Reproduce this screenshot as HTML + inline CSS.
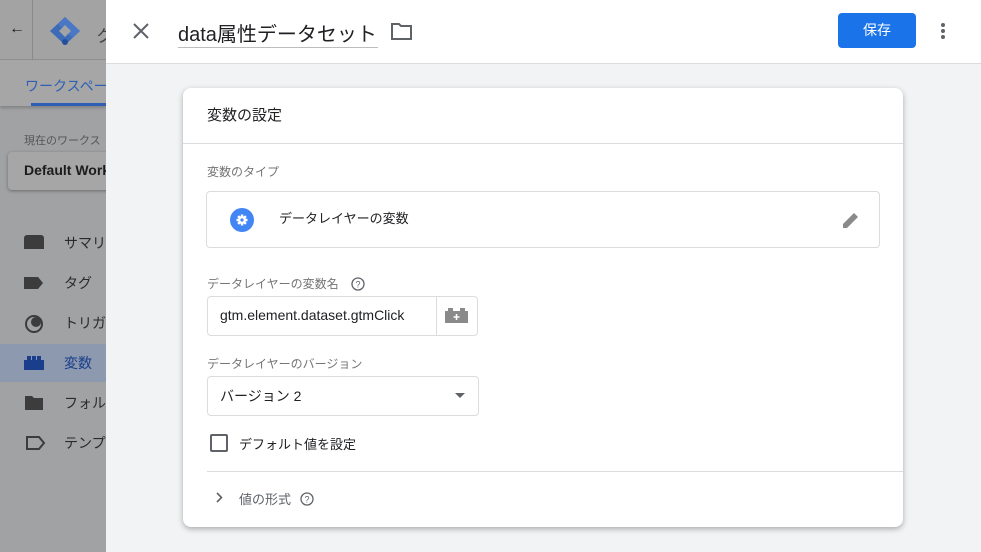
<!DOCTYPE html>
<html><head><meta charset="utf-8"><style>
*{box-sizing:border-box;margin:0;padding:0}
body{width:981px;height:552px;overflow:hidden;position:relative;font-family:"Liberation Sans","Noto Sans CJK JP",sans-serif;background:#a2a3a4}
.abs{position:absolute;white-space:nowrap}
.left{left:0;top:0;width:106px;height:552px;background:#a1a2a3;overflow:hidden}
.lt{font-size:14px;color:#2a2a2a}
.main{left:106px;top:0;width:875px;height:552px;background:#f1f3f4}
.top{left:106px;top:0;width:875px;height:64px;background:#fff;border-bottom:1px solid #dadce0}
.card{left:183px;top:88px;width:720px;height:439px;background:#fff;border-radius:8px;box-shadow:0 2px 6px rgba(0,0,0,.3)}
.lbl{font-size:12px;color:#757575}
</style></head><body>
<div class="abs left">
 <div class="abs" style="left:0;top:0;width:106px;height:60px;background:#a3a3a3;border-bottom:1px solid #909090"></div>
 <div class="abs" style="left:32px;top:0;width:1px;height:60px;background:#8a8a8a"></div>
 <div class="abs" style="left:9px;top:20px;font-size:16px;color:#222">←</div>
 <svg class="abs" style="left:49px;top:16px" width="32" height="30" viewBox="0 0 32 30"><path d="M16 1 L31 15 L16 29 L1 15Z" fill="#3d6bb8"/><path d="M16 1 L31 15 L23.5 22 L9 8Z" fill="#4a78c4"/><path d="M16 9 L22 15 L16 21 L10 15Z" fill="#a3a3a3"/><circle cx="16" cy="26" r="3" fill="#234f9a"/></svg>
 <div class="abs" style="left:96px;top:22px;font-size:17px;color:#444">ク</div>
 <div class="abs" style="left:0;top:60px;width:106px;height:46px;background:#a6a6a6;box-shadow:0 2px 3px rgba(0,0,0,.2)"></div>
 <div class="abs" style="left:25px;top:76px;font-size:14px;color:#2f5fb5">ワークスペー</div>
 <div class="abs" style="left:31px;top:103px;width:75px;height:3px;background:#2f5fb5"></div>
 <div class="abs" style="left:24px;top:132px;font-size:11px;color:#555">現在のワークス</div>
 <div class="abs" style="left:8px;top:152px;width:110px;height:38px;background:#a6a6a6;border-radius:4px;box-shadow:0 1px 3px rgba(0,0,0,.35)"></div>
 <div class="abs" style="left:24px;top:162px;font-size:14px;color:#1c1c1c;font-weight:bold">Default Work</div>
 <div class="abs" style="left:24px;top:235px;width:20px;height:14px;background:#3c3c3c;border-radius:3px 3px 0 0"></div>
 <div class="abs lt" style="left:64px;top:233px">サマリ</div>
 <svg class="abs" style="left:24px;top:277px" width="20" height="12"><path d="M0 0H14L19 6L14 12H0Z" fill="#3c3c3c"/></svg>
 <div class="abs lt" style="left:64px;top:273px">タグ</div>
 <svg class="abs" style="left:24px;top:314px" width="20" height="20"><circle cx="10" cy="10" r="8" fill="none" stroke="#3c3c3c" stroke-width="2"/><circle cx="12" cy="8" r="5" fill="#3c3c3c"/></svg>
 <div class="abs lt" style="left:64px;top:313px">トリガ</div>
 <div class="abs" style="left:0;top:344px;width:106px;height:38px;background:#8c99ae"></div>
 <svg class="abs" style="left:24px;top:356px" width="20" height="14"><path d="M0 4H3V0H7V4H8V0H12V4H13V0H17V4H20V14H0Z" fill="#1a3e8c"/></svg>
 <div class="abs lt" style="left:64px;top:353px;color:#1a3e8c">変数</div>
 <svg class="abs" style="left:25px;top:396px" width="18" height="14"><path d="M0 0H7L9 2H18V14H0Z" fill="#3c3c3c"/></svg>
 <div class="abs lt" style="left:64px;top:393px">フォル</div>
 <svg class="abs" style="left:26px;top:436px" width="20" height="14"><path d="M1 1H13L18 7L13 13H1Z" fill="none" stroke="#3c3c3c" stroke-width="2"/></svg>
 <div class="abs lt" style="left:64px;top:433px">テンプ</div>
</div>
<div class="abs main"></div>
<div class="abs top"></div>
<svg class="abs" style="left:133px;top:23px" width="16" height="16"><path d="M1 1L15 15M15 1L1 15" stroke="#5f6368" stroke-width="2"/></svg>
<div class="abs" style="left:178px;top:18px;font-size:20px;color:#202124">data属性データセット</div>
<div class="abs" style="left:178px;top:47px;width:200px;height:1px;background:#bdbdbd"></div>
<svg class="abs" style="left:391px;top:23px" width="21" height="17"><path d="M1 1H8L10 3H20V16H1Z" fill="none" stroke="#5f6368" stroke-width="2"/></svg>
<div class="abs" style="left:838px;top:13px;width:78px;height:35px;background:#1a73e8;border-radius:4px;color:#fff;font-size:14px;text-align:center;line-height:35px">保存</div>
<svg class="abs" style="left:940px;top:22px" width="6" height="18"><circle cx="3" cy="3" r="2" fill="#5f6368"/><circle cx="3" cy="9" r="2" fill="#5f6368"/><circle cx="3" cy="15" r="2" fill="#5f6368"/></svg>
<div class="abs card">
 <div class="abs" style="left:24px;top:16px;font-size:15px;color:#202124">変数の設定</div>
 <div class="abs" style="left:0;top:55px;width:720px;height:1px;background:#dadce0"></div>
 <div class="abs lbl" style="left:24px;top:75px">変数のタイプ</div>
 <div class="abs" style="left:23px;top:103px;width:674px;height:57px;border:1px solid #dadce0;border-radius:4px"></div>
 <svg class="abs" style="left:47px;top:120px" width="24" height="24" viewBox="0 0 24 24"><circle cx="12" cy="12" r="12" fill="#4285f4"/><g fill="#fff"><circle cx="12" cy="12" r="4"/><rect x="10.8" y="6.5" width="2.4" height="11"/><rect x="6.5" y="10.8" width="11" height="2.4"/><rect x="10.8" y="6.5" width="2.4" height="11" transform="rotate(45 12 12)"/><rect x="10.8" y="6.5" width="2.4" height="11" transform="rotate(-45 12 12)"/></g><circle cx="12" cy="12" r="1.6" fill="#4285f4"/></svg>
 <div class="abs" style="left:96px;top:120px;font-size:13px;color:#202124">データレイヤーの変数</div>
 <svg class="abs" style="left:659px;top:123px" width="18" height="18"><path d="M1 17V13L12 2L16 6L5 17Z" fill="#8a8a8a"/></svg>
 <div class="abs lbl" style="left:24px;top:187px">データレイヤーの変数名</div>
 <svg class="abs" style="left:168px;top:189px" width="14" height="14"><circle cx="7" cy="7" r="6" fill="none" stroke="#5f6368" stroke-width="1.3"/><text x="7" y="10.5" font-size="9" text-anchor="middle" fill="#5f6368" font-family="Liberation Sans">?</text></svg>
 <div class="abs" style="left:24px;top:208px;width:271px;height:40px;border:1px solid #dadce0;border-radius:4px"></div>
 <div class="abs" style="left:253px;top:208px;width:1px;height:40px;background:#dadce0"></div>
 <div class="abs" style="left:37px;top:219px;font-size:14px;color:#202124">gtm.element.dataset.gtmClick</div>
 <svg class="abs" style="left:262px;top:220px" width="24" height="15"><path d="M0 3H3V0H8V3H15V0H20V3H23V15H0Z" fill="#8a8a8a"/><path d="M11.5 6V12M8.5 9H14.5" stroke="#fff" stroke-width="1.5"/></svg>
 <div class="abs lbl" style="left:24px;top:267px">データレイヤーのバージョン</div>
 <div class="abs" style="left:24px;top:288px;width:272px;height:40px;border:1px solid #dadce0;border-radius:4px"></div>
 <div class="abs" style="left:37px;top:298px;font-size:14px;color:#202124">バージョン 2</div>
 <svg class="abs" style="left:272px;top:305px" width="10" height="5"><path d="M0 0H10L5 5Z" fill="#5f6368"/></svg>
 <div class="abs" style="left:27px;top:346px;width:18px;height:18px;border:2px solid #5f6368;border-radius:2px"></div>
 <div class="abs" style="left:56px;top:346px;font-size:13px;color:#202124">デフォルト値を設定</div>
 <div class="abs" style="left:24px;top:383px;width:696px;height:1px;background:#dadce0"></div>
 <svg class="abs" style="left:33px;top:404px" width="7" height="11"><path d="M1 1L5.5 5.5L1 10" fill="none" stroke="#5f6368" stroke-width="1.6"/></svg>
 <div class="abs" style="left:56px;top:401px;font-size:13px;color:#5f6368">値の形式</div>
 <svg class="abs" style="left:117px;top:404px" width="14" height="14"><circle cx="7" cy="7" r="6" fill="none" stroke="#5f6368" stroke-width="1.3"/><text x="7" y="10.5" font-size="9" text-anchor="middle" fill="#5f6368" font-family="Liberation Sans">?</text></svg>
</div>
</body></html>
